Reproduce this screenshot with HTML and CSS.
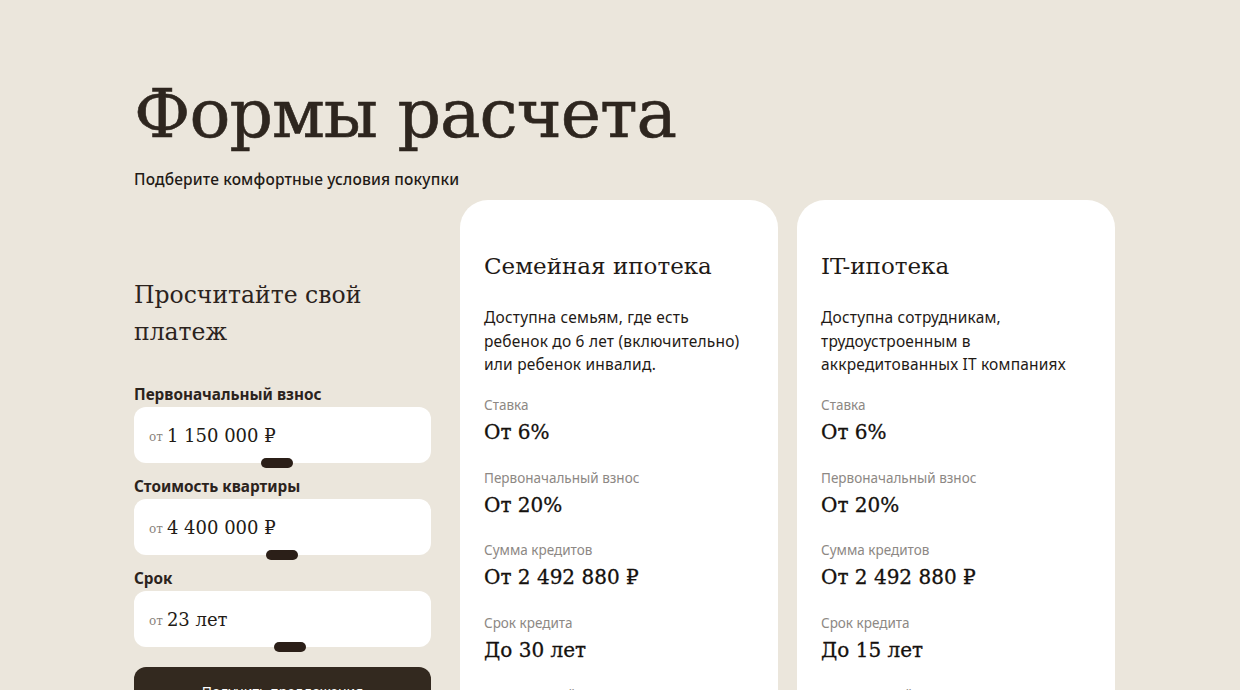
FILE: index.html
```html
<!DOCTYPE html>
<html lang="ru">
<head>
    <meta charset="UTF-8">
    <meta name="viewport" content="width=device-width, initial-scale=1.0">
    <title>Формы расчета</title>
    <link rel="stylesheet" href="styles.css">
</head>
<body>
    <div class="page">
        <h1 class="title">Формы расчета</h1>
        <p class="subtitle">Подберите комфортные условия покупки</p>

        <div class="row">
            <div class="calc">
                <h2 class="calc-title">Просчитайте свой платеж</h2>

                <div class="field">
                    <div class="field-label">Первоначальный взнос</div>
                    <div class="field-box">
                        <span class="from">от</span><span class="value">1 150 000 ₽</span>
                        <span class="knob" style="left: 127px"></span>
                    </div>
                </div>

                <div class="field">
                    <div class="field-label">Стоимость квартиры</div>
                    <div class="field-box">
                        <span class="from">от</span><span class="value">4 400 000 ₽</span>
                        <span class="knob" style="left: 132px"></span>
                    </div>
                </div>

                <div class="field">
                    <div class="field-label">Срок</div>
                    <div class="field-box">
                        <span class="from">от</span><span class="value">23 лет</span>
                        <span class="knob" style="left: 140px"></span>
                    </div>
                </div>

                <button class="submit">Получить предложения</button>
            </div>

            <div class="card">
                <h3 class="card-title">Семейная ипотека</h3>
                <p class="card-text">Доступна семьям, где есть ребенок до 6 лет (включительно) или ребенок инвалид.</p>
                <div class="stat">
                    <div class="stat-label">Ставка</div>
                    <div class="stat-value">От 6%</div>
                </div>
                <div class="stat">
                    <div class="stat-label">Первоначальный взнос</div>
                    <div class="stat-value">От 20%</div>
                </div>
                <div class="stat">
                    <div class="stat-label">Сумма кредитов</div>
                    <div class="stat-value">От 2 492 880 ₽</div>
                </div>
                <div class="stat">
                    <div class="stat-label">Срок кредита</div>
                    <div class="stat-value">До 30 лет</div>
                </div>
                <div class="stat">
                    <div class="stat-label">Ежемесячный платеж</div>
                    <div class="stat-value">От 14 946 ₽</div>
                </div>
            </div>

            <div class="card">
                <h3 class="card-title">IT-ипотека</h3>
                <p class="card-text">Доступна сотрудникам, трудоустроенным в аккредитованных IT компаниях</p>
                <div class="stat">
                    <div class="stat-label">Ставка</div>
                    <div class="stat-value">От 6%</div>
                </div>
                <div class="stat">
                    <div class="stat-label">Первоначальный взнос</div>
                    <div class="stat-value">От 20%</div>
                </div>
                <div class="stat">
                    <div class="stat-label">Сумма кредитов</div>
                    <div class="stat-value">От 2 492 880 ₽</div>
                </div>
                <div class="stat">
                    <div class="stat-label">Срок кредита</div>
                    <div class="stat-value">До 15 лет</div>
                </div>
                <div class="stat">
                    <div class="stat-label">Ежемесячный платеж</div>
                    <div class="stat-value">От 21 033 ₽</div>
                </div>
            </div>
        </div>
    </div>
</body>
</html>
```

FILE: styles.css
```css
body{
    margin: 0;
    background-color: #ebe6dc;
    color: #2b231d;
    font-family: "Noto Sans", "Open Sans", sans-serif;
}
.page{
    padding: 69px 0 0 134px;
    width: 1001px;
}
.title{
    font-family: "DejaVu Serif", "Liberation Serif", serif;
    font-weight: 400;
    font-size: 68px;
    line-height: 90px;
    margin: 0;
    letter-spacing: -1px;
    color: #2e261f;
    -webkit-text-stroke: 0.6px #2e261f;
}
.subtitle{
    margin: 10px 0 0 0;
    font-size: 15.5px;
    font-weight: 500;
    letter-spacing: 0.15px;
    line-height: 20px;
    color: #1f1a16;
}
.row{
    display: flex;
    align-items: flex-start;
    margin-top: 11px;
}
.calc{
    flex-shrink: 0;
    width: 297px;
    margin-top: 77px;
    margin-right: 29px;
}
.calc-title{
    font-family: "DejaVu Serif", "Liberation Serif", serif;
    font-weight: 400;
    font-size: 23.5px;
    line-height: 37px;
    margin: 0 0 33px 0;
}
.field{
    margin-bottom: 13px;
}
.field-label{
    font-size: 15.3px;
    font-weight: 700;
    line-height: 20px;
    margin-bottom: 3px;
}
.field-box{
    position: relative;
    background-color: #fff;
    border-radius: 12px;
    height: 56px;
    display: flex;
    align-items: center;
    padding: 0 15px;
}
.from{
    font-family: "DejaVu Serif", serif;
    font-size: 12px;
    color: #8a837c;
    margin-right: 4px;
    margin-top: 3px;
}
.value{
    font-family: "DejaVu Serif", serif;
    font-size: 18px;
    color: #221b16;
}
/* slider handle sitting on the bottom edge of the field */
.knob{
    position: absolute;
    bottom: -5px;
    width: 32px;
    height: 10px;
    border-radius: 5px;
    background-color: #2b1f18;
}
.submit{
    display: block;
    width: 100%;
    height: 56px;
    margin-top: 20px;
    border: 0;
    border-radius: 12px;
    background-color: #33291f;
    color: #fff;
    font-family: "Noto Sans", sans-serif;
    font-size: 14px;
    padding-bottom: 8px;
}
.card{
    flex-shrink: 0;
    box-sizing: border-box;
    width: 318px;
    height: 560px;
    background-color: #fff;
    border-radius: 28px;
    padding: 49px 24px 0 24px;
    margin-right: 19px;
}
.card:last-child{
    margin-right: 0;
}
.card-title{
    font-family: "DejaVu Serif", serif;
    font-weight: 400;
    font-size: 23px;
    line-height: 34px;
    margin: 0 0 23px 0;
    color: #1f1a16;
}
.card-text{
    font-size: 15.5px;
    letter-spacing: 0.2px;
    line-height: 23.5px;
    margin: 0 0 19.5px 0;
    color: #1f1a16;
}
.stat{
    margin-bottom: 21.5px;
}
.stat-label{
    font-size: 13.5px;
    line-height: 18px;
    color: #8d8884;
    margin-bottom: 3px;
}
.stat-value{
    font-family: "DejaVu Serif", serif;
    font-size: 20px;
    line-height: 30px;
    color: #15110e;
    -webkit-text-stroke: 0.3px #15110e;
}
```
